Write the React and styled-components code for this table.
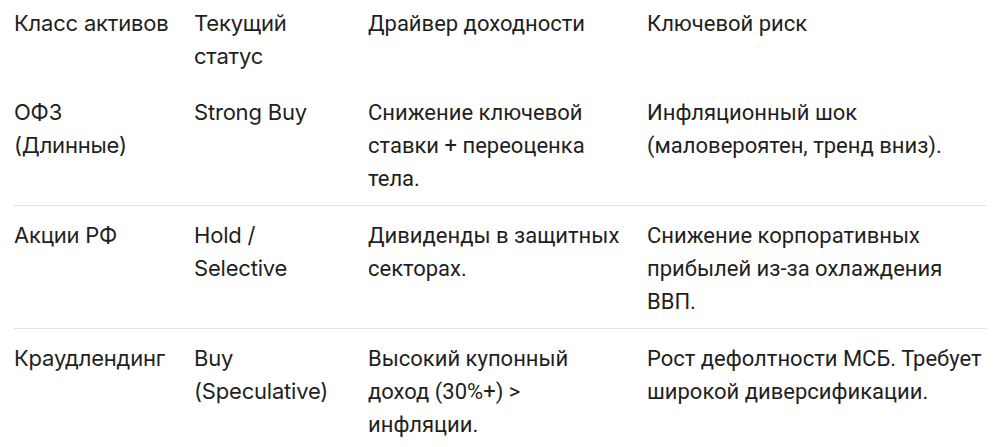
import styled, { createGlobalStyle } from "styled-components";

const GlobalStyle = createGlobalStyle`
  body {
    margin: 0;
    background: #ffffff;
  }
`;

const Page = styled.div`
  padding: 0 14px;
`;

const Table = styled.table`
  border-collapse: collapse;
  table-layout: fixed;
  width: 973px;
  color: #1f1f1f;
`;

const Row = styled.tr`
  border-bottom: 1px solid #e3e3e3;

  &:last-child {
    border-bottom: none;
  }
`;

// first two columns use a rounder sans, the rest Roboto
const Cell = styled.td`
  vertical-align: top;
  text-align: left;
  padding: 13px 20px 10px 0;
  font-family: ${(p) =>
    p.$label ? '"Inter", "Noto Sans", sans-serif' : '"Roboto", "Noto Sans", sans-serif'};
  font-size: 22px;
  font-weight: 400;
  line-height: 33px;
  letter-spacing: ${(p) => (p.$label ? "-0.2px" : "0")};

  &:last-child {
    padding-right: 0;
  }
`;

const HeadCell = styled(Cell).attrs({ as: "th" })`
  padding-top: 7px;
  padding-bottom: 10px;
`;

const columns = [180, 174, 279, 340];

const head = ["Класс активов", "Текущий статус", "Драйвер доходности", "Ключевой риск"];

const rows = [
  [
    "ОФЗ (Длинные)",
    "Strong Buy",
    "Снижение ключевой ставки + переоценка тела.",
    "Инфляционный шок (маловероятен, тренд вниз).",
  ],
  [
    "Акции РФ",
    "Hold / Selective",
    "Дивиденды в защитных секторах.",
    "Снижение корпоративных прибылей из-за охлаждения ВВП.",
  ],
  [
    "Краудлендинг",
    "Buy (Speculative)",
    "Высокий купонный доход (30%+) > инфляции.",
    "Рост дефолтности МСБ. Требует широкой диверсификации.",
  ],
];

export default function App() {
  return (
    <Page>
      <GlobalStyle />
      <Table>
        <colgroup>
          {columns.map((w, i) => (
            <col key={i} style={{ width: w }} />
          ))}
        </colgroup>
        <thead>
          <Row>
            {head.map((h, i) => (
              <HeadCell key={i} $label={i < 2}>
                {h}
              </HeadCell>
            ))}
          </Row>
        </thead>
        <tbody>
          {rows.map((r, ri) => (
            <Row key={ri}>
              {r.map((c, i) => (
                <Cell key={i} $label={i < 2}>
                  {c}
                </Cell>
              ))}
            </Row>
          ))}
        </tbody>
      </Table>
    </Page>
  );
}
